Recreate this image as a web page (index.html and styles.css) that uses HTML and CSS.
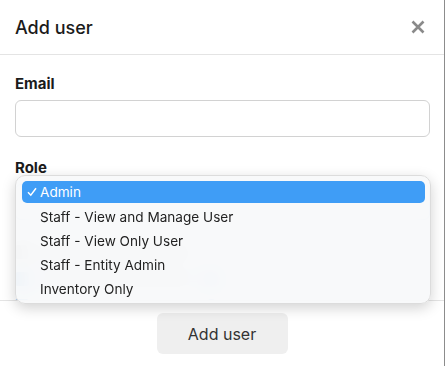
FILE: index.html
```html
<!DOCTYPE html>
<html>
  <head>
    <meta charset="utf-8" />
    <title>Add user</title>
    <link rel="stylesheet" href="styles.css">
  </head>
  <body>
    <div class="modal">
      <div class="modal-header">
        <span class="modal-title">Add user</span>
        <svg class="close" width="14" height="14" viewBox="0 0 14 14">
          <path d="M1.5 1.5 L12.5 12.5 M12.5 1.5 L1.5 12.5" />
        </svg>
      </div>

      <div class="modal-body">
        <label class="field-label">Email</label>
        <input class="text-input" type="text" />

        <label class="field-label">Role</label>
        <div class="select-wrap">
          <div class="select-box"></div>

          <!-- form rows seen blurred through the popup -->
          <div class="ghost-rows">
            <div class="check-row">
              <span class="checkbox muted"></span>
              <span class="text-ghost"></span>
            </div>
            <div class="check-row">
              <span class="checkbox"></span>
              <span class="text-ghost"></span>
              <span class="info-dot"></span>
            </div>
            <div class="check-row">
              <span class="checkbox"></span>
              <span class="text-ghost"></span>
              <span class="info-dot"></span>
            </div>
          </div>

          <!-- native select popup, open over the form -->
          <div class="popup">
            <div class="option selected">
              <svg class="tick" width="10" height="10" viewBox="0 0 10 10">
                <path d="M1 5.2 L3.8 8.2 L9 1.2" />
              </svg>Admin</div>
            <div class="option">Staff - View and Manage User</div>
            <div class="option">Staff - View Only User</div>
            <div class="option">Staff - Entity Admin</div>
            <div class="option">Inventory Only</div>
          </div>
        </div>
      </div>

      <div class="modal-footer">
        <button class="btn">Add user</button>
      </div>
    </div>
  </body>
</html>
```

FILE: styles.css
```css
html, body {
  margin: 0;
  height: 100%;
}
body {
  background-color: white;
  color: #1b1b1b;
  font-family: Inter, "Liberation Sans", sans-serif;
}
.modal {
  width: 444px;
  height: 100%;
  border-right: 1px solid #8c8c8c;
  display: flex;
  flex-direction: column;
}
.modal-header {
  height: 54px;
  padding: 0 19px 0 15px;
  border-bottom: 1px solid #e4e4e4;
  display: flex;
  align-items: center;
  justify-content: space-between;
  flex-shrink: 0;
}
.modal-title {
  font-size: 18px;
  font-weight: 500;
}
.close path {
  stroke: #8a8a8a;
  stroke-width: 2.6;
  fill: none;
}
.modal-body {
  padding: 19px 14px 0 15px;
  display: flex;
  flex-direction: column;
  flex-shrink: 0;
}
.modal-body > * {
  flex-shrink: 0;
}
.field-label {
  font-size: 15px;
  font-weight: 700;
  line-height: 20px;
  margin-bottom: 6px;
}
.text-input {
  height: 37px;
  box-sizing: border-box;
  border: 1px solid #d2d2d2;
  border-radius: 6px;
  margin: 0 0 21px 0;
  font-size: 15px;
}
.select-wrap {
  position: relative;
  height: 116px;
}
.select-box {
  height: 36px;
  box-sizing: border-box;
  border: 1px solid #b8d6f2;
  border-radius: 6px;
  margin-bottom: 18px;
}
.ghost-rows {
  height: 62px;
  overflow: hidden;
}
.check-row {
  display: flex;
  align-items: center;
  gap: 10px;
  height: 27px;
}
.checkbox {
  width: 14px;
  height: 14px;
  border-radius: 3px;
  background-color: #8fbcec;
}
.checkbox.muted {
  background-color: #c8c8c8;
}
.text-ghost {
  width: 156px;
  height: 7px;
  border-radius: 4px;
  background-color: #d6d6d6;
}
.info-dot {
  width: 13px;
  height: 13px;
  border-radius: 50%;
  background-color: #8cc4f7;
}
.popup {
  position: absolute;
  left: 0;
  top: -9px;
  width: 416px;
  height: 129px;
  box-sizing: border-box;
  padding: 5px 5px 0 6px;
  overflow: hidden;
  border-radius: 10px;
  border: 1px solid #dcdcdc;
  background-color: rgba(247, 248, 249, 0.9);
  backdrop-filter: blur(10px);
  box-shadow: 0 4px 14px rgba(0, 0, 0, 0.18);
}
.option {
  height: 24px;
  line-height: 24px;
  padding-left: 18px;
  font-size: 13.6px;
  color: #222;
  border-radius: 5px;
  position: relative;
}
.option.selected {
  background-color: #3f9df6;
  color: white;
  height: 22px;
  line-height: 22px;
  margin-bottom: 2px;
}
.tick {
  position: absolute;
  left: 5px;
  top: 6px;
}
.tick path {
  stroke: white;
  stroke-width: 1.5;
  fill: none;
}
.modal-footer {
  border-top: 1px solid #e4e4e4;
  padding: 12px 0 12px 0;
  display: flex;
  justify-content: center;
  flex-shrink: 0;
}
.btn {
  width: 131px;
  height: 41px;
  border: none;
  border-radius: 6px;
  background-color: #efefef;
  color: #333;
  font-family: inherit;
  font-size: 16px;
}
```
